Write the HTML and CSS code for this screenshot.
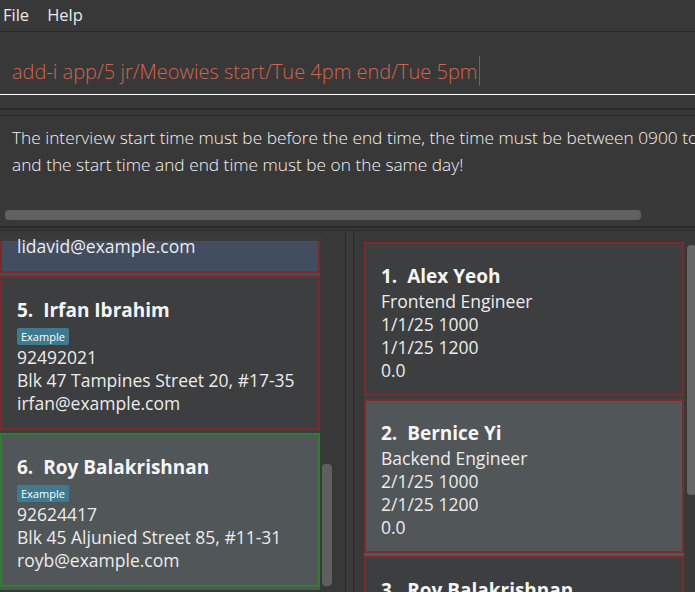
FILE: index.html
```html
<!DOCTYPE html>
<html>
<head>
<meta charset="utf-8">
<link rel="stylesheet" href="styles.css">
</head>
<body>
<div class="app">
  <div class="menubar">
    <span class="menu-item">File</span>
    <span class="menu-item">Help</span>
  </div>
  <div class="command-pane">
    <div class="command-field"><span class="command-text">add-i app/5 jr/Meowies start/Tue 4pm end/Tue 5pm</span><span class="caret"></span></div>
  </div>
  <div class="spacer-pane"></div>
  <div class="result-pane">
    <div class="result-text">
      <p>The interview start time must be before the end time, the time must be between 0900 to 2100,</p>
      <p>and the start time and end time must be on the same day!</p>
    </div>
    <div class="hscroll"><div class="hthumb"></div></div>
  </div>
  <div class="lists">
    <div class="list-left">
      <div class="list-inner shifted">
        <div class="cell selected">
          <div class="card">
            <div class="name">4.&nbsp; David Li</div>
            <span class="tag">Example</span>
            <div class="line">91031282</div>
            <div class="line">Blk 436 Serangoon Gardens Street 26, #16-43</div>
            <div class="line">lidavid@example.com</div>
          </div>
        </div>
        <div class="cell">
          <div class="card">
            <div class="name">5.&nbsp; Irfan Ibrahim</div>
            <span class="tag">Example</span>
            <div class="line">92492021</div>
            <div class="line">Blk 47 Tampines Street 20, #17-35</div>
            <div class="line">irfan@example.com</div>
          </div>
        </div>
        <div class="cell odd">
          <div class="card green">
            <div class="name">6.&nbsp; Roy Balakrishnan</div>
            <span class="tag">Example</span>
            <div class="line">92624417</div>
            <div class="line">Blk 45 Aljunied Street 85, #11-31</div>
            <div class="line">royb@example.com</div>
          </div>
        </div>
      </div>
      <div class="vscroll"><div class="vthumb left-thumb"></div></div>
    </div>
    <div class="divider"></div>
    <div class="list-right">
      <div class="list-inner padded">
        <div class="cell">
          <div class="card">
            <div class="name">1.&nbsp; Alex Yeoh</div>
            <div class="line">Frontend Engineer</div>
            <div class="line">1/1/25 1000</div>
            <div class="line">1/1/25 1200</div>
            <div class="line">0.0</div>
          </div>
        </div>
        <div class="cell odd">
          <div class="card">
            <div class="name">2.&nbsp; Bernice Yi</div>
            <div class="line">Backend Engineer</div>
            <div class="line">2/1/25 1000</div>
            <div class="line">2/1/25 1200</div>
            <div class="line">0.0</div>
          </div>
        </div>
        <div class="cell">
          <div class="card">
            <div class="name">3.&nbsp; Roy Balakrishnan</div>
            <div class="line">Software Engineer</div>
            <div class="line">3/1/25 1000</div>
            <div class="line">3/1/25 1200</div>
            <div class="line">0.0</div>
          </div>
        </div>
      </div>
      <div class="vscroll right"><div class="vthumb right-thumb"></div></div>
    </div>
  </div>
</div>
</body>
</html>
```

FILE: styles.css
```css
* { box-sizing: border-box; }
html, body { margin: 0; padding: 0; }
body {
  background: #383838;
  font-family: "Open Sans", "Noto Sans", sans-serif;
  color: #ffffff;
  width: 695px;
  height: 592px;
  overflow: hidden;
}
.app { display: flex; flex-direction: column; height: 592px; }

.menubar {
  height: 32px;
  display: flex;
  align-items: center;
  gap: 18px;
  padding-left: 3px;
  border-bottom: 1px solid #2a2a2a;
  font-size: 16.5px;
  color: #e8e8e8;
}
.menu-item { line-height: 28px; padding-bottom: 2px; }

.command-pane {
  height: 78px;
  border-bottom: 2px solid #2b2b2b;
}
.command-field {
  height: 63px;
  border-bottom: 1px solid #ffffff;
  display: flex;
  align-items: center;
  padding-left: 12px;
  padding-top: 16px;
  font-size: 20px;
  font-weight: 300;
}
.command-text { color: #d06651; }
.caret {
  display: inline-block;
  width: 1px;
  height: 30px;
  background: #a0503f;
  margin-left: 1px;
}
.spacer-pane {
  height: 6px;
  border-bottom: 1px solid #2b2b2b;
}
.result-pane {
  height: 112px;
  position: relative;
  border-bottom: 2px solid #2b2b2b;
  overflow: hidden;
}
.result-text {
  padding: 8px 0 0 12px;
  font-size: 17.3px;
  font-weight: 300;
  line-height: 27px;
  white-space: nowrap;
  color: #f2f2f2;
}
.result-text p { margin: 0; }
.hscroll {
  position: absolute;
  left: 5px;
  top: 94px;
  width: 636px;
  height: 10px;
}
.hthumb {
  width: 100%;
  height: 100%;
  background: #616161;
  border-radius: 4px;
}

.lists {
  flex: 1;
  display: flex;
  border-top: 1px solid #2b2b2b;
  margin-top: 2px;
  overflow: hidden;
}
.list-left {
  width: 345px;
  display: flex;
  overflow: hidden;
  margin-top: 4px;
  position: relative;
}
.list-left::before {
  content: "";
  position: absolute;
  left: 0;
  top: 0;
  width: 322px;
  height: 6px;
  background: #3a3a3a;
  z-index: 1;
}
.list-left .name,
.list-left .tag,
.list-left .line { position: relative; z-index: 2; }
.list-left .list-inner { width: 320px; flex: none; }
.list-inner.shifted { margin-top: -116px; }
.divider {
  width: 9px;
  border-left: 1px solid #2b2b2b;
  border-right: 1px solid #2b2b2b;
  background: #3a3a3a;
}
.list-right {
  flex: 1;
  display: flex;
  overflow: hidden;
  padding-left: 10px;
}
.list-right .list-inner { width: 320px; flex: none; }
.list-inner.padded { padding-top: 11px; }

.cell {
  background: #3c3e3f;
  padding-bottom: 3px;
}
.cell.odd { background: #515658; }
.cell.selected { background: #424d5f; }
.card {
  height: 154px;
  border: 2px solid #7d2a2a;
  padding: 18px 10px 0 15px;
}
.card.green { border-color: #2f7d2f; }

.name {
  font-size: 19px;
  font-weight: 700;
  line-height: 28px;
  color: #f5f5f5;
  white-space: nowrap;
}
.tag {
  display: inline-block;
  background: #3e7b91;
  color: #ffffff;
  font-size: 11px;
  line-height: 17px;
  padding: 0 4px;
  border-radius: 2px;
  margin-top: 1px;
}
.line {
  font-size: 17.5px;
  line-height: 23px;
  color: #ececec;
  white-space: nowrap;
}

.vscroll {
  width: 25px;
  position: relative;
  flex: none;
}
.vthumb {
  position: absolute;
  background: #5f5f5f;
  border-radius: 4px;
}
.left-thumb { left: 2px; width: 10px; top: 229px; height: 122px; }
.vscroll.right { width: 12px; margin-left: 3px; }
.right-thumb { left: 0; width: 9px; top: 14px; height: 250px; background: #666; }
```
